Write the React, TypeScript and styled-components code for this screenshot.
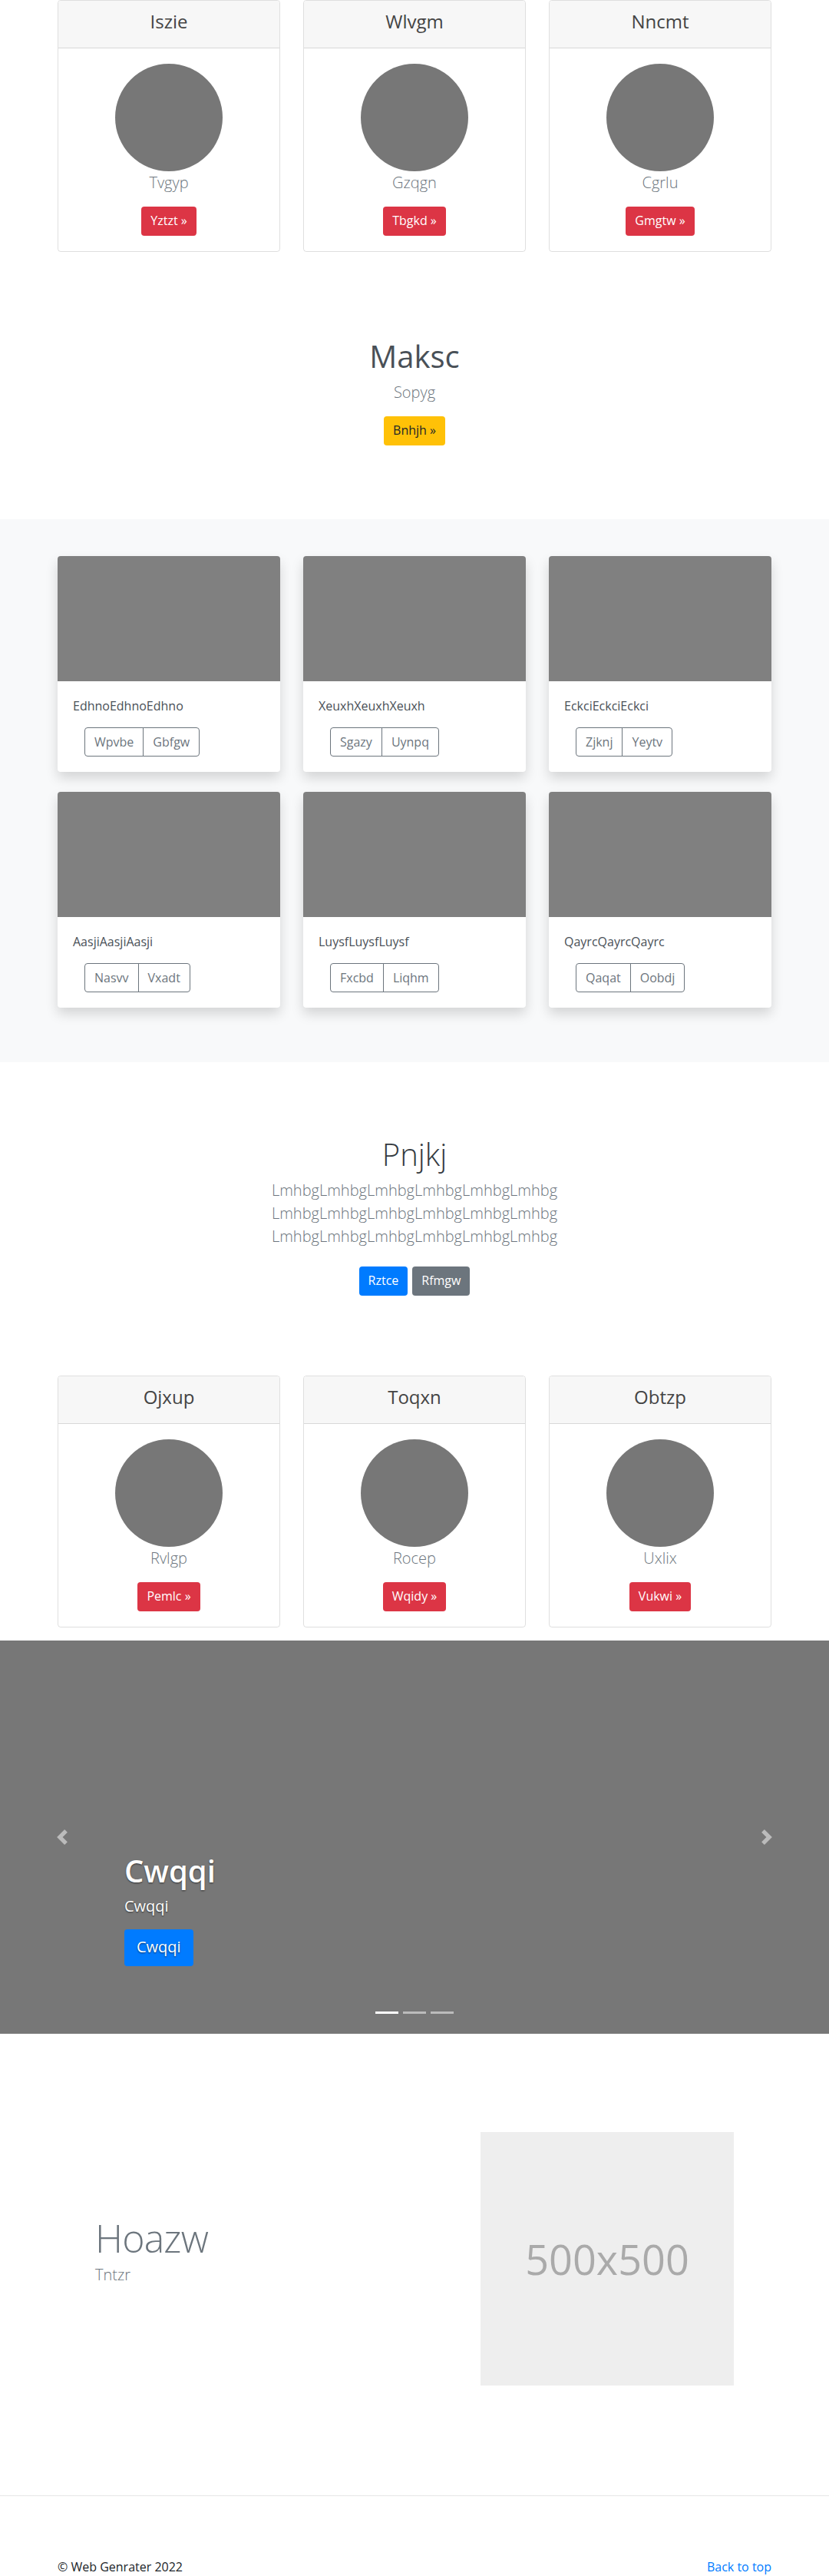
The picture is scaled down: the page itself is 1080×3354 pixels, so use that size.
import React from "react";
import styled, { createGlobalStyle } from "styled-components";

const GlobalStyle = createGlobalStyle`
  * { box-sizing: border-box; }
  body {
    margin: 0;
    font-family: "Open Sans", "Noto Sans", Arial, sans-serif;
    font-size: 16px;
    line-height: 1.5;
    color: #212529;
    background: #fff;
  }
`;

const pricing1 = [
  { title: "Iszie", name: "Tvgyp", action: "Yztzt" },
  { title: "Wlvgm", name: "Gzqgn", action: "Tbgkd" },
  { title: "Nncmt", name: "Cgrlu", action: "Gmgtw" },
];

const pricing2 = [
  { title: "Ojxup", name: "Rvlgp", action: "Pemlc" },
  { title: "Toqxn", name: "Rocep", action: "Wqidy" },
  { title: "Obtzp", name: "Uxlix", action: "Vukwi" },
];

const album = [
  { text: "EdhnoEdhnoEdhno", a: "Wpvbe", b: "Gbfgw" },
  { text: "XeuxhXeuxhXeuxh", a: "Sgazy", b: "Uynpq" },
  { text: "EckciEckciEckci", a: "Zjknj", b: "Yeytv" },
  { text: "AasjiAasjiAasji", a: "Nasvv", b: "Vxadt" },
  { text: "LuysfLuysfLuysf", a: "Fxcbd", b: "Liqhm" },
  { text: "QayrcQayrcQayrc", a: "Qaqat", b: "Oobdj" },
];

const Container = styled.div`
  width: 930px;
  margin: 0 auto;
`;

const CardGrid = styled.div<{ $gap?: number }>`
  display: grid;
  grid-template-columns: repeat(3, 1fr);
  column-gap: 30px;
  row-gap: ${(p) => p.$gap ?? 0}px;
`;

const PricingSection = styled.section<{ $after: number }>`
  margin-bottom: ${(p) => p.$after}px;
`;

const PriceCard = styled.div`
  height: 328px;
  border: 1px solid rgba(0, 0, 0, 0.125);
  border-radius: 4px;
  display: flex;
  flex-direction: column;
  overflow: hidden;
`;

const PriceHeader = styled.div`
  height: 62px;
  background: #f7f7f7;
  border-bottom: 1px solid rgba(0, 0, 0, 0.125);
  padding: 12px 20px 0;
  text-align: center;

  h4 {
    margin: 0;
    font-size: 24px;
    line-height: 29px;
    font-weight: 500;
    color: #444;
  }
`;

const PriceBody = styled.div`
  padding: 20px;
  display: flex;
  flex-direction: column;
  align-items: center;
`;

const Avatar = styled.div`
  width: 140px;
  height: 140px;
  border-radius: 50%;
  background: #777;
`;

const Lead = styled.p<{ $color?: string }>`
  margin: 0;
  font-size: 20px;
  line-height: 30px;
  font-weight: 300;
  color: ${(p) => p.$color ?? "#6c757d"};
`;

const Btn = styled.a<{ $variant: "danger" | "warning" | "primary" | "secondary"; $lg?: boolean }>`
  display: inline-block;
  height: ${(p) => (p.$lg ? 48 : 38)}px;
  padding: ${(p) => (p.$lg ? "8px 16px" : "6px 12px")};
  font-size: ${(p) => (p.$lg ? 20 : 16)}px;
  line-height: ${(p) => (p.$lg ? 30 : 24)}px;
  border-radius: 4px;
  white-space: nowrap;
  text-decoration: none;
  cursor: pointer;
  background: ${(p) =>
    ({ danger: "#dc3545", warning: "#ffc107", primary: "#007bff", secondary: "#6c757d" })[p.$variant]};
  color: ${(p) => (p.$variant === "warning" ? "#212529" : "#fff")};
`;

const PriceName = styled(Lead)`
  margin-bottom: 16px;
`;

function PricingCard({ title, name, action }: { title: string; name: string; action: string }) {
  return (
    <PriceCard>
      <PriceHeader>
        <h4>{title}</h4>
      </PriceHeader>
      <PriceBody>
        <Avatar />
        <PriceName>{name}</PriceName>
        <Btn $variant="danger">{action} »</Btn>
      </PriceBody>
    </PriceCard>
  );
}

const Hero = styled.section`
  padding: 96px 0;
  text-align: center;

  h1 {
    margin: 0 0 8px;
    font-size: 40px;
    line-height: 48px;
    font-weight: 500;
    color: #495057;
  }
`;

const HeroLead = styled(Lead)`
  margin-bottom: 16px;
`;

const AlbumSection = styled.section`
  background: #f8f9fa;
  padding: 48px 0 71px;
`;

const AlbumCard = styled.div`
  background: #fff;
  border-radius: 4px;
  overflow: hidden;
  box-shadow: 0 8px 16px rgba(0, 0, 0, 0.15);
`;

const Thumb = styled.div`
  height: 163px;
  background: #808080;
`;

const AlbumBody = styled.div`
  padding: 20px;

  p {
    margin: 0 0 16px;
    font-size: 16px;
    line-height: 24px;
    color: #495057;
  }
`;

const BtnGroup = styled.div`
  display: inline-flex;
  margin-left: 15px;
`;

const OutlineBtn = styled.button`
  height: 38px;
  padding: 6px 12px;
  font: inherit;
  font-size: 16px;
  line-height: 24px;
  color: #6c757d;
  background: transparent;
  border: 1px solid #6c757d;
  cursor: pointer;

  &:first-child {
    border-radius: 4px 0 0 4px;
  }
  & + & {
    margin-left: -1px;
    border-radius: 0 4px 4px 0;
  }
`;

const Jumbotron = styled.section`
  padding: 96px 0;
  text-align: center;

  h1 {
    margin: 0 0 8px;
    font-size: 40px;
    line-height: 48px;
    font-weight: 300;
    color: #343a40;
  }
`;

const JumboLead = styled(Lead)`
  max-width: 450px;
  margin: 0 auto 16px;
`;

const BtnRow = styled.div`
  display: flex;
  justify-content: center;
  gap: 6px;
  padding: 8px 0;
`;

const Carousel = styled.section`
  position: relative;
  height: 512px;
  background: #777;
`;

const Caption = styled.div`
  position: absolute;
  left: 15%;
  right: 15%;
  bottom: 88px;
  color: #fff;
  text-shadow: 0 1px 2px rgba(0, 0, 0, 0.6);

  h1 {
    margin: 0 0 8px;
    font-size: 40px;
    line-height: 48px;
    font-weight: 600;
  }
  p {
    margin: 0 0 16px;
    font-size: 20px;
    line-height: 28px;
  }
`;

const Control = styled.a<{ $side: "left" | "right" }>`
  position: absolute;
  top: 0;
  bottom: 0;
  ${(p) => p.$side}: 0;
  width: 15%;
  display: flex;
  align-items: center;
  justify-content: center;
  opacity: 0.5;
`;

const Indicators = styled.ol`
  position: absolute;
  left: 0;
  right: 0;
  bottom: 26px;
  margin: 0;
  padding: 0;
  list-style: none;
  display: flex;
  justify-content: center;
  gap: 6px;
`;

const Indicator = styled.li<{ $active?: boolean }>`
  width: 30px;
  height: 3px;
  background: #fff;
  opacity: ${(p) => (p.$active ? 1 : 0.5)};
`;

const Featurette = styled.section`
  padding: 128px 0 143px;
`;

const FeatRow = styled.div`
  width: 832px;
  margin: 0 auto;
  display: grid;
  grid-template-columns: 1fr 330px;
  align-items: center;

  h2 {
    margin: 0 0 8px;
    font-size: 50px;
    line-height: 1;
    font-weight: 300;
    letter-spacing: -0.8px;
    color: #6c757d;
  }
`;

const FeatLead = styled(Lead)`
  margin-bottom: 16px;
`;

const Placeholder = styled.div`
  width: 330px;
  height: 330px;
  background: #eee;
  color: #aaa;
  font-size: 54px;
  display: flex;
  align-items: center;
  justify-content: center;
`;

const Divider = styled.hr`
  margin: 0;
  border: 0;
  border-top: 1px solid rgba(0, 0, 0, 0.1);
`;

const Footer = styled.footer`
  padding-top: 80px;

  ${Container} {
    display: flex;
    justify-content: space-between;
  }
  p {
    margin: 0;
    line-height: 24px;
  }
  a {
    color: #007bff;
    text-decoration: none;
  }
`;

function Chevron({ dir }: { dir: "prev" | "next" }) {
  return (
    <svg width="20" height="20" viewBox="0 0 8 8" fill="#fff">
      {dir === "prev" ? (
        <path d="M5.25 0l-4 4 4 4 1.5-1.5L4.25 4l2.5-2.5L5.25 0z" />
      ) : (
        <path d="M2.75 0l-1.5 1.5L3.75 4l-2.5 2.5L2.75 8l4-4-4-4z" />
      )}
    </svg>
  );
}

export default function App() {
  return (
    <>
      <GlobalStyle />
      <PricingSection $after={16}>
        <Container>
          <CardGrid>
            {pricing1.map((c) => (
              <PricingCard key={c.title} {...c} />
            ))}
          </CardGrid>
        </Container>
      </PricingSection>

      <Hero>
        <h1>Maksc</h1>
        <HeroLead>Sopyg</HeroLead>
        <Btn $variant="warning">Bnhjh »</Btn>
      </Hero>

      <AlbumSection>
        <Container>
          <CardGrid $gap={26}>
            {album.map((c) => (
              <AlbumCard key={c.text}>
                <Thumb />
                <AlbumBody>
                  <p>{c.text}</p>
                  <BtnGroup>
                    <OutlineBtn>{c.a}</OutlineBtn>
                    <OutlineBtn>{c.b}</OutlineBtn>
                  </BtnGroup>
                </AlbumBody>
              </AlbumCard>
            ))}
          </CardGrid>
        </Container>
      </AlbumSection>

      <Jumbotron>
        <h1>Pnjkj</h1>
        <JumboLead>
          LmhbgLmhbgLmhbgLmhbgLmhbgLmhbg LmhbgLmhbgLmhbgLmhbgLmhbgLmhbg LmhbgLmhbgLmhbgLmhbgLmhbgLmhbg
        </JumboLead>
        <BtnRow>
          <Btn $variant="primary">Rztce</Btn>
          <Btn $variant="secondary">Rfmgw</Btn>
        </BtnRow>
      </Jumbotron>

      <PricingSection $after={17}>
        <Container>
          <CardGrid>
            {pricing2.map((c) => (
              <PricingCard key={c.title} {...c} />
            ))}
          </CardGrid>
        </Container>
      </PricingSection>

      <Carousel>
        <Control $side="left">
          <Chevron dir="prev" />
        </Control>
        <Control $side="right">
          <Chevron dir="next" />
        </Control>
        <Caption>
          <h1>Cwqqi</h1>
          <p>Cwqqi</p>
          <Btn $variant="primary" $lg>
            Cwqqi
          </Btn>
        </Caption>
        <Indicators>
          <Indicator $active />
          <Indicator />
          <Indicator />
        </Indicators>
      </Carousel>

      <Featurette>
        <FeatRow>
          <div>
            <h2>Hoazw</h2>
            <FeatLead>Tntzr</FeatLead>
          </div>
          <Placeholder>500x500</Placeholder>
        </FeatRow>
      </Featurette>

      <Divider />

      <Footer>
        <Container>
          <p>© Web Genrater 2022</p>
          <p>
            <a href="#">Back to top</a>
          </p>
        </Container>
      </Footer>
    </>
  );
}
